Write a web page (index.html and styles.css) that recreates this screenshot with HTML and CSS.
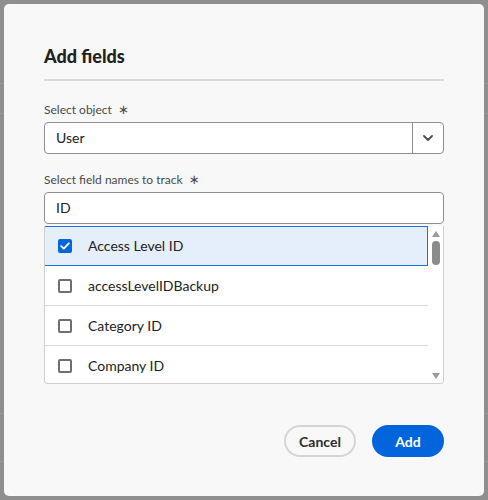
FILE: index.html
```html
<!DOCTYPE html>
<html>
<head>
<meta charset="utf-8">
<link rel="stylesheet" href="styles.css">
</head>
<body>
<div class="backdrop">
  <div class="bg-lines">
    <div class="bl" style="top:83px"></div>
    <div class="bl" style="top:113px"></div>
    <div class="bl" style="top:413px"></div>
    <div class="bl" style="top:461px"></div>
  </div>
  <div class="dialog">
    <h2 class="title">Add fields</h2>
    <div class="divider"></div>
    <div class="field">
      <label class="label">Select object <span class="req">∗</span></label>
      <div class="select">
        <div class="select-value">User</div>
        <div class="select-btn">
          <svg width="10" height="6" viewBox="0 0 10 6"><path d="M1 1 L5 5 L9 1" fill="none" stroke="#4b4b4b" stroke-width="1.8" stroke-linecap="round" stroke-linejoin="round"/></svg>
        </div>
      </div>
    </div>
    <div class="field field2">
      <label class="label">Select field names to track <span class="req">∗</span></label>
      <div class="input">ID</div>
      <div class="list">
        <div class="items">
          <div class="item selected">
            <span class="cb checked"><svg width="10" height="8" viewBox="0 0 10 8"><path d="M1.2 4.2 L3.8 6.6 L8.8 1.4" fill="none" stroke="#fff" stroke-width="1.8" stroke-linecap="round" stroke-linejoin="round"/></svg></span>
            <span class="item-text">Access Level ID</span>
          </div>
          <div class="item"><span class="cb"></span><span class="item-text">accessLevelIDBackup</span></div>
          <div class="item"><span class="cb"></span><span class="item-text">Category ID</span></div>
          <div class="item last"><span class="cb"></span><span class="item-text">Company ID</span></div>
        </div>
        <div class="scrollbar">
          <span class="arrow up"></span>
          <span class="thumb"></span>
          <span class="track"></span>
          <span class="arrow down"></span>
        </div>
      </div>
    </div>
    <div class="footer">
      <button class="btn secondary">Cancel</button>
      <button class="btn primary">Add</button>
    </div>
  </div>
</div>
</body>
</html>
```
FILE: styles.css
```css
* { box-sizing: border-box; }
html, body { margin: 0; padding: 0; }
body {
  width: 488px;
  height: 500px;
  background: #8f8f8f;
  font-family: "Lato", "Noto Sans", sans-serif;
  overflow: hidden;
}
.backdrop {
  position: relative;
  width: 488px;
  height: 500px;
  padding: 4px;
}
.bg-lines .bl {
  position: absolute;
  left: 0;
  right: 0;
  height: 1px;
  background: #9a9a9a;
}
.dialog {
  position: relative;
  width: 480px;
  height: 492px;
  background: #f8f8f8;
  border-radius: 5px;
  padding: 40px 40px 0 40px;
  display: flex;
  flex-direction: column;
}
.title {
  margin: 0;
  font-size: 18px;
  font-weight: 900;
  line-height: 24px;
  color: #222;
}
.divider {
  margin-top: 11px;
  height: 2px;
  background: #d8d8d8;
}
.field { margin-top: 20px; display: flex; flex-direction: column; }
.field2 { margin-top: 17px; }
.label {
  font-size: 12px;
  line-height: 18px;
  color: #4a4a4a;
  margin-bottom: 3px;
}
.req {
  font-family: "DejaVu Sans", sans-serif;
  font-size: 13px;
  margin-left: 3px;
  color: #4a4a4a;
}
.select {
  display: flex;
  height: 32px;
  border: 1px solid #8f8f8f;
  border-radius: 4px;
  background: #fff;
}
.select-value {
  flex: 1;
  padding-left: 11px;
  font-size: 14px;
  line-height: 30px;
  color: #222;
}
.select-btn {
  width: 31px;
  border-left: 1px solid #8f8f8f;
  display: flex;
  align-items: center;
  justify-content: center;
}
.input {
  height: 32px;
  border: 1px solid #8f8f8f;
  border-radius: 4px;
  background: #fff;
  padding-left: 11px;
  font-size: 14px;
  line-height: 30px;
  color: #222;
}
.list {
  margin-top: 2px;
  height: 158px;
  border: 1px solid #d0d0d0;
  border-top: none;
  border-radius: 0 0 4px 4px;
  background: #fff;
  display: flex;
  overflow: hidden;
}
.items { flex: 1; display: flex; flex-direction: column; }
.item {
  height: 40px;
  flex-shrink: 0;
  display: flex;
  align-items: center;
  border-bottom: 1px solid #dadada;
  padding-left: 13px;
  font-size: 14px;
  color: #222;
}
.item.selected {
  background: #e5effb;
  border: 1px solid #1473e6;
  padding-left: 13px;
  margin-left: -1px;
}
.item.last { border-bottom: none; }
.cb {
  width: 14px;
  height: 14px;
  border: 2px solid #6e6e6e;
  border-radius: 2px;
  margin-right: 16px;
  display: flex;
  align-items: center;
  justify-content: center;
  background: #fff;
}
.cb.checked { background: #0265dc; border-color: #0265dc; }
.item-text { line-height: 20px; }
.scrollbar {
  width: 15px;
  display: flex;
  flex-direction: column;
  align-items: center;
  padding: 5px 0 4px;
  background: #fff;
}
.arrow { width: 0; height: 0; border-left: 4.5px solid transparent; border-right: 4.5px solid transparent; }
.arrow.up { border-bottom: 6px solid #9a9a9a; }
.arrow.down { border-top: 6px solid #9a9a9a; }
.thumb {
  margin-top: 4px;
  width: 8px;
  height: 24px;
  border-radius: 4px;
  background: #8b8b8b;
}
.track { flex: 1; }
.footer {
  margin-top: auto;
  margin-bottom: 39px;
  display: flex;
  justify-content: flex-end;
  gap: 16px;
}
.btn {
  height: 32px;
  border-radius: 16px;
  font-family: inherit;
  font-size: 14px;
  font-weight: 700;
  padding: 0 10px;
  cursor: pointer;
}
.btn.secondary {
  width: 72px;
  background: #f8f8f8;
  border: 2px solid #d5d5d5;
  color: #2c2c2c;
}
.btn.primary {
  width: 72px;
  background: #0265dc;
  border: none;
  color: #fff;
}
```
